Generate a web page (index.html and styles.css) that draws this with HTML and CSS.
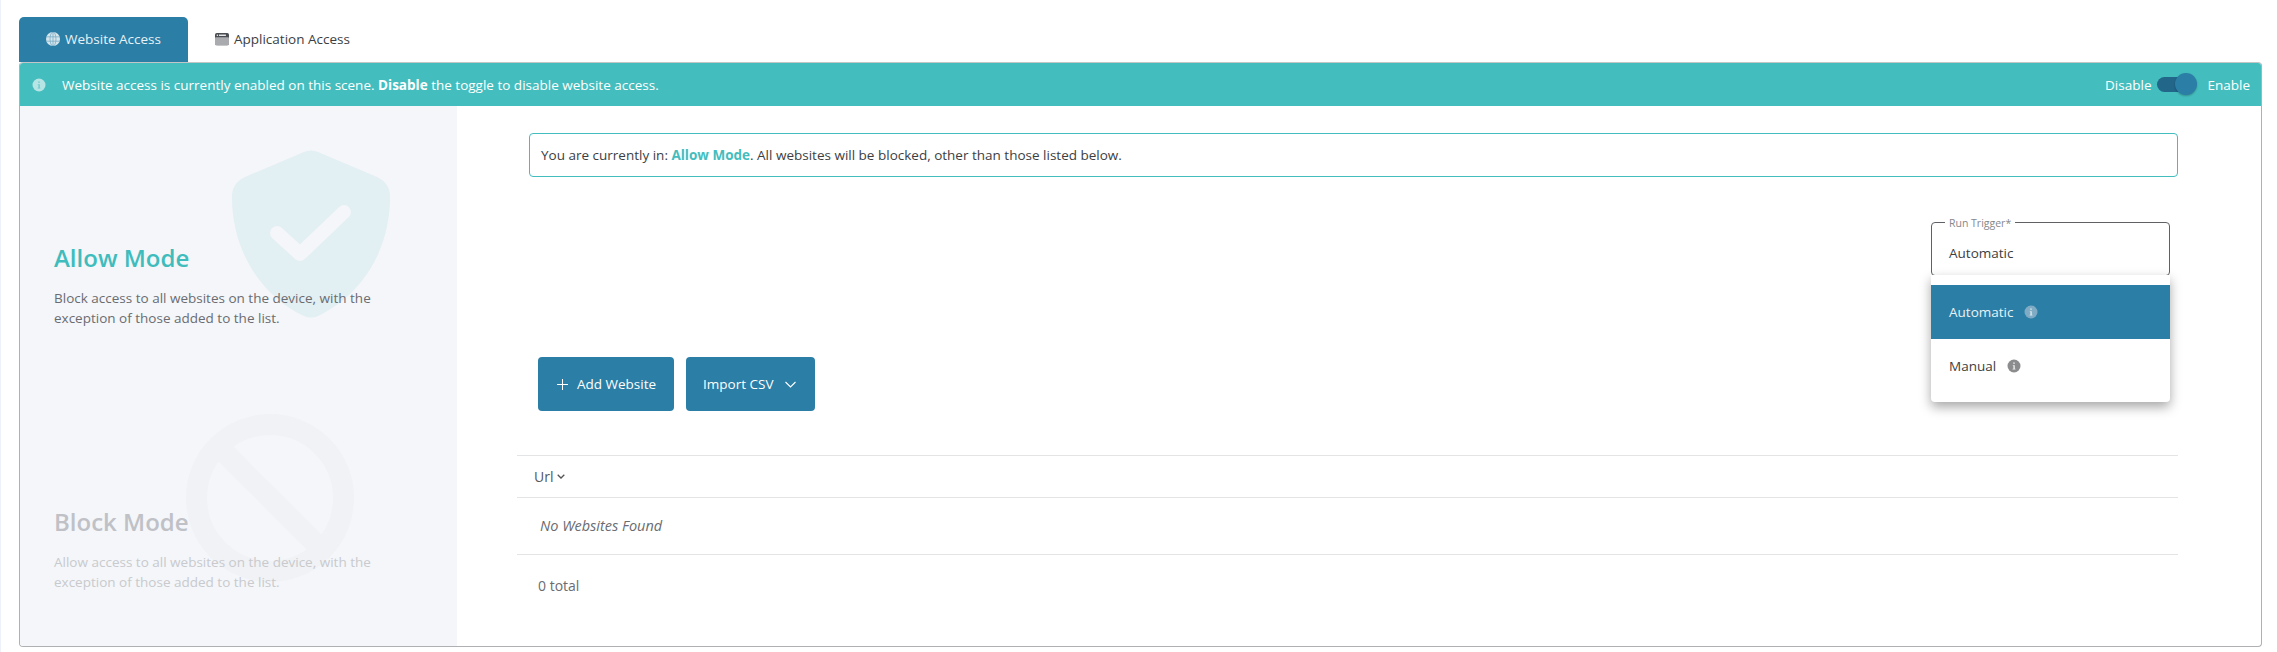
FILE: index.html
```html
<!DOCTYPE html>
<html lang="en">
<head>
<meta charset="utf-8">
<title>Website Access</title>
<link rel="stylesheet" href="styles.css">
</head>
<body>
<nav class="tabs">
  <a class="tab tab-active">
    <svg class="tab-icon" viewBox="0 0 16 16"><circle cx="8" cy="8" r="8" fill="#d5e5ec"/><g fill="none" stroke="#6fa6c2" stroke-width=".8"><ellipse cx="8" cy="8" rx="3.400" ry="8"/><path d="M.5 5.500h15M.5 10.500h15M8 0v16"/></g></svg>
    Website Access
  </a>
  <a class="tab">
    <svg class="tab-icon" viewBox="0 0 16 14"><rect x="0" y="0" width="16" height="14" rx="2" fill="#4a4d52"/><rect x="0" y="5" width="16" height="9" rx="1" fill="#a9abae"/><rect x="2" y="2" width="1.400" height="1.400" fill="#fff"/><rect x="4.500" y="2" width="8" height="1.400" fill="#fff"/></svg>
    Application Access
  </a>
</nav>
<section class="card">
  <header class="banner">
    <svg class="info-icon" viewBox="0 0 14 14"><circle cx="7" cy="7" r="6.500" fill="#b7e4e4"/><path d="M6.200 3.600h1.600v1.200H6.200zM5.800 6.200h2v3.600h.6v.8H5.600v-.8h.8V7h-.6z" fill="#6fcaca"/></svg>
    <p class="banner-text">Website access is currently enabled on this scene. <b>Disable</b> the toggle to disable website access.</p>
    <div class="toggle-group">
      <span>Disable</span>
      <span class="toggle"><span class="toggle-thumb"></span></span>
      <span>Enable</span>
    </div>
  </header>
  <div class="card-body">
    <aside class="sidebar">
      <div class="mode mode-allow">
        <svg class="mode-icon shield" viewBox="0 0 158 168"><path d="M72 2Q79-1 86 2L145 27Q158 33 158 47C158 100 130 145 86 166Q79 169 72 166C28 145 0 100 0 47Q0 33 13 27Z" fill="#e2eff3"/><path d="M45 83L68 104L112 62" fill="none" stroke="#f4f6fa" stroke-width="14" stroke-linecap="round" stroke-linejoin="round"/></svg>
        <h2 class="mode-title">Allow Mode</h2>
        <p class="mode-desc">Block access to all websites on the device, with the exception of those added to the list.</p>
      </div>
      <div class="mode mode-block">
        <svg class="mode-icon ban" viewBox="0 0 168 168"><g fill="none" stroke="#f0f2f5" stroke-width="21"><circle cx="84" cy="84" r="73.500"/><path d="M32 32L136 136"/></g></svg>
        <h2 class="mode-title">Block Mode</h2>
        <p class="mode-desc">Allow access to all websites on the device, with the exception of those added to the list.</p>
      </div>
    </aside>
    <main class="content">
      <div class="notice">You are currently in: <b>Allow Mode</b>. All websites will be blocked, other than those listed below.</div>
      <div class="trigger-row">
        <div class="select">
          <span class="select-label">Run Trigger*</span>
          <span class="select-value">Automatic</span>
          <ul class="menu">
            <li class="menu-item menu-item-active">Automatic
              <svg class="menu-info" viewBox="0 0 14 14"><circle cx="7" cy="7" r="6.500" fill="#7fabc4"/><path d="M6.200 3.600h1.600v1.200H6.200zM5.800 6.200h2v3.600h.6v.8H5.600v-.8h.8V7h-.6z" fill="#dbe8ef"/></svg>
            </li>
            <li class="menu-item">Manual
              <svg class="menu-info" viewBox="0 0 14 14"><circle cx="7" cy="7" r="6.500" fill="#8b8c8e"/><path d="M6.200 3.600h1.600v1.200H6.200zM5.800 6.200h2v3.600h.6v.8H5.600v-.8h.8V7h-.6z" fill="#eee"/></svg>
            </li>
          </ul>
        </div>
      </div>
      <div class="actions">
        <button class="btn btn-add"><svg class="btn-plus" viewBox="0 0 11 11"><path d="M5.500 0v11M0 5.500h11" stroke="#fff" stroke-width="1" fill="none"/></svg>Add Website</button>
        <button class="btn btn-import">Import CSV<svg class="btn-chevron" viewBox="0 0 11 7"><path d="M.5 1L5.500 6L10.500 1" stroke="#fff" stroke-width="1.100" fill="none"/></svg></button>
      </div>
      <div class="table">
        <div class="table-head">Url<svg class="sort-icon" viewBox="0 0 8 5"><path d="M.7.8L4 4L7.300.8" stroke="#555" stroke-width="1.300" fill="none"/></svg></div>
        <div class="table-empty">No Websites Found</div>
        <div class="table-foot">0 total</div>
      </div>
    </main>
  </div>
</section>
</body>
</html>
```
FILE: styles.css
```css
* { box-sizing: border-box; }
html, body { height: 100%; }
body {
  margin: 0;
  padding: 17px 15px 0 18px;
  background: #fff;
  border-left: 1px solid #eef1f7;
  font-family: "Open Sans", "Liberation Sans", sans-serif;
  font-size: 13.500px;
  color: #3c3e42;
  overflow: hidden;
}
.tabs { display: flex; height: 45px; }
.tab {
  display: flex;
  align-items: center;
  gap: 5px;
  height: 45px;
  padding: 0 27px 2px;
  border-radius: 5px 5px 0 0;
  color: #3c3e42;
  white-space: nowrap;
}
.tab-active { width: 169px; background: #2b7ea6; color: #e8f2f6; }
.tab-icon { width: 14px; height: 14px; flex: none; }
.card {
  height: 585px;
  border: 1px solid #aeb0b3;
  border-top-color: #c4c5c7;
  border-radius: 4px;
  display: flex;
  flex-direction: column;
  overflow: hidden;
}
.banner {
  flex: none;
  height: 43px;
  background: #44bdbe;
  color: #fff;
  display: flex;
  align-items: center;
  padding: 0 11px 0 12px;
}
.info-icon { width: 14px; height: 14px; flex: none; margin-right: 16px; }
.banner-text { margin: 0; flex: 1; }
.toggle-group { display: flex; align-items: center; gap: 6px; }
.toggle {
  position: relative;
  display: block;
  width: 33px;
  height: 15px;
  margin-right: 11px;
  background: #22668a;
  border-radius: 8px;
}
.toggle-thumb {
  position: absolute;
  top: -4px;
  right: -7px;
  width: 22px;
  height: 22px;
  border-radius: 50%;
  background: #2b7ea6;
  box-shadow: 0 1px 2px rgba(0,0,0,.25);
}
.card-body { flex: 1; display: flex; min-height: 0; }
.sidebar { flex: none; width: 437px; background: #f4f6fa; }
.mode {
  position: relative;
  height: 264px;
  padding: 134px 0 0 34px;
}
.mode-icon { position: absolute; }
.shield { left: 212px; top: 44px; width: 158px; height: 168px; }
.ban { left: 166px; top: 44px; width: 168px; height: 168px; }
.mode-title {
  position: relative;
  margin: 0 0 12px;
  font-size: 24px;
  font-weight: 600;
  line-height: 36px;
}
.mode-desc {
  position: relative;
  margin: 0;
  width: 340px;
  line-height: 20px;
  color: #6a6c71;
}
.mode-allow .mode-title { color: #3fbcbc; }
.mode-block .mode-title { color: #bfc1c6; }
.mode-block .mode-desc { color: #c8cacd; }
.content { flex: 1; min-width: 0; padding: 27px 83px 0 60px; }
.notice {
  margin-left: 12px;
  height: 44px;
  padding: 0 11px;
  border: 1px solid #44bdbe;
  border-radius: 4px;
  color: #3c3e42;
  line-height: 42px;
}
.notice b { color: #44bdbe; }
.trigger-row { display: flex; justify-content: flex-end; margin-top: 45px; padding-right: 8px; }
.select {
  position: relative;
  width: 239px;
  height: 54px;
  padding: 18px 17px 0;
  border: 1px solid #5f6165;
  border-radius: 4px;
  background: #fff;
}
.select-label {
  position: absolute;
  left: 13px;
  top: -7px;
  padding: 0 4px;
  font-size: 10.500px;
  line-height: 14px;
  background: #fff;
  color: #85878b;
}
.select-value { display: block; line-height: 24px; }
.menu {
  position: absolute;
  left: -1px;
  top: 52px;
  width: 239px;
  height: 127px;
  margin: 0;
  padding: 10px 0 0;
  list-style: none;
  background: #fff;
  border-radius: 0 0 4px 4px;
  box-shadow: 0 5px 12px rgba(0,0,0,.35);
  z-index: 2;
}
.menu-item {
  display: flex;
  align-items: center;
  gap: 11px;
  height: 54px;
  padding: 0 0 0 18px;
}
.menu-item-active { background: #2b7ea6; color: #e8f2f6; }
.menu-info { width: 14px; height: 14px; }
.actions { display: flex; gap: 12px; margin-top: 81px; padding-left: 21px; }
.btn {
  display: flex;
  align-items: center;
  height: 54px;
  border: 0;
  border-radius: 4px;
  background: #2b7ea6;
  color: #fff;
  font: inherit;
  font-weight: 500;
}
.btn-add { width: 136px; padding: 0 0 0 19px; }
.btn-import { width: 129px; padding: 0 0 0 17px; }
.btn-plus { width: 11px; height: 11px; margin-right: 9px; }
.btn-chevron { width: 11px; height: 7px; margin-left: 12px; }
.table { margin-top: 44px; }
.table-head {
  display: flex;
  align-items: center;
  gap: 4px;
  height: 43px;
  padding-left: 17px;
  border-top: 1px solid #e3e4e5;
  border-bottom: 1px solid #e3e4e5;
  color: #55575b;
  font-size: 14px;
}
.sort-icon { width: 8px; height: 5px; }
.table-empty {
  height: 57px;
  display: flex;
  align-items: center;
  padding: 0 0 2px 23px;
  font-size: 14.500px;
  font-style: italic;
  color: #6a6c71;
  border-bottom: 1px solid #e3e4e5;
}
.table-foot { height: 62px; display: flex; align-items: center; padding: 0 0 2px 21px; font-size: 14px; color: #6a6c71; }
```
